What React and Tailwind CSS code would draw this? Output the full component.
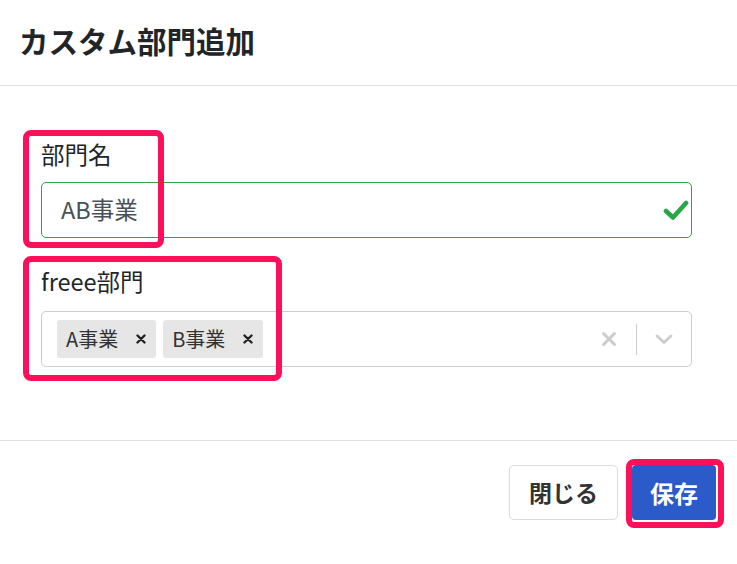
import React from "react";

const font = { fontFamily: '"Noto Sans CJK JP", "Noto Sans", sans-serif' };

function Tag({ label }) {
  return (
    <div className="flex h-[38px] items-center rounded-[3px] bg-[#e6e6e6] pl-[9px] pr-[10px]">
      <span className="text-[20px] leading-none text-[#333]">{label}</span>
      <svg className="ml-[18px]" width="10" height="10" viewBox="0 0 10 10">
        <path d="M1.5 1.5 L8.5 8.5 M8.5 1.5 L1.5 8.5" stroke="#222" strokeWidth="2.4" strokeLinecap="round" />
      </svg>
    </div>
  );
}

export default function App() {
  return (
    <div className="relative h-[564px] w-[737px] overflow-hidden bg-white" style={font}>
      <div className="h-[86px] border-b border-[#dee2e6] pl-[19px] pt-[19px]">
        <h1 className="text-[29.5px] font-bold leading-[42px] text-[#212529]">カスタム部門追加</h1>
      </div>

      <div className="pb-[73px] pl-[41px] pr-[45px] pt-[51px]">
        <label className="block text-[23.5px] leading-[34px] text-[#212529]">部門名</label>
        <div className="mt-[11px] flex h-[56px] items-center justify-between rounded-[5px] border border-[#28a745] pl-[19px] pr-[2px]">
          <span className="text-[23.5px] text-[#495057]">AB事業</span>
          <svg width="26" height="22" viewBox="0 0 26 22">
            <path d="M3 12 L10 18.5 L23 4" fill="none" stroke="#28a745" strokeWidth="4.6" strokeLinecap="round" strokeLinejoin="round" />
          </svg>
        </div>

        <label className="mt-[26px] block text-[23.5px] leading-[34px] text-[#212529]">freee部門</label>
        <div className="mt-[13px] flex h-[56px] items-center rounded-[5px] border border-[#cccccc] pl-[15px]">
          <div className="flex flex-1 gap-[7px]">
            <Tag label="A事業" />
            <Tag label="B事業" />
          </div>
          <svg className="mr-[19px]" width="16" height="16" viewBox="0 0 16 16">
            <path d="M2.5 2.5 L13.5 13.5 M13.5 2.5 L2.5 13.5" stroke="#cccccc" strokeWidth="3" strokeLinecap="round" />
          </svg>
          <div className="h-[31px] w-px bg-[#cccccc]" />
          <svg className="ml-[18px] mr-[18px]" width="18" height="12" viewBox="0 0 18 12">
            <path d="M2 3 L9 9.5 L16 3" fill="none" stroke="#cccccc" strokeWidth="2.8" strokeLinecap="round" strokeLinejoin="round" />
          </svg>
        </div>
      </div>

      <div className="flex justify-end gap-[14px] border-t border-[#dee2e6] pr-[21px] pt-[24px]">
        <button className="h-[55px] w-[109px] rounded-[5px] border border-[#dcdcdc] bg-white text-[23px] font-bold text-[#333]">
          閉じる
        </button>
        <button className="h-[55px] w-[84px] rounded-[4px] bg-[#2a5bc8] text-[24px] font-bold text-white">
          保存
        </button>
      </div>

      <div className="pointer-events-none absolute left-[23px] top-[130px] h-[118px] w-[141px] rounded-[8px] border-[6px] border-[#fc105a]" />
      <div className="pointer-events-none absolute left-[23px] top-[256px] h-[125px] w-[259px] rounded-[8px] border-[6px] border-[#fc105a]" />
      <div className="pointer-events-none absolute left-[626px] top-[459px] h-[69px] w-[98px] rounded-[8px] border-[6px] border-[#fc105a]" />
    </div>
  );
}
